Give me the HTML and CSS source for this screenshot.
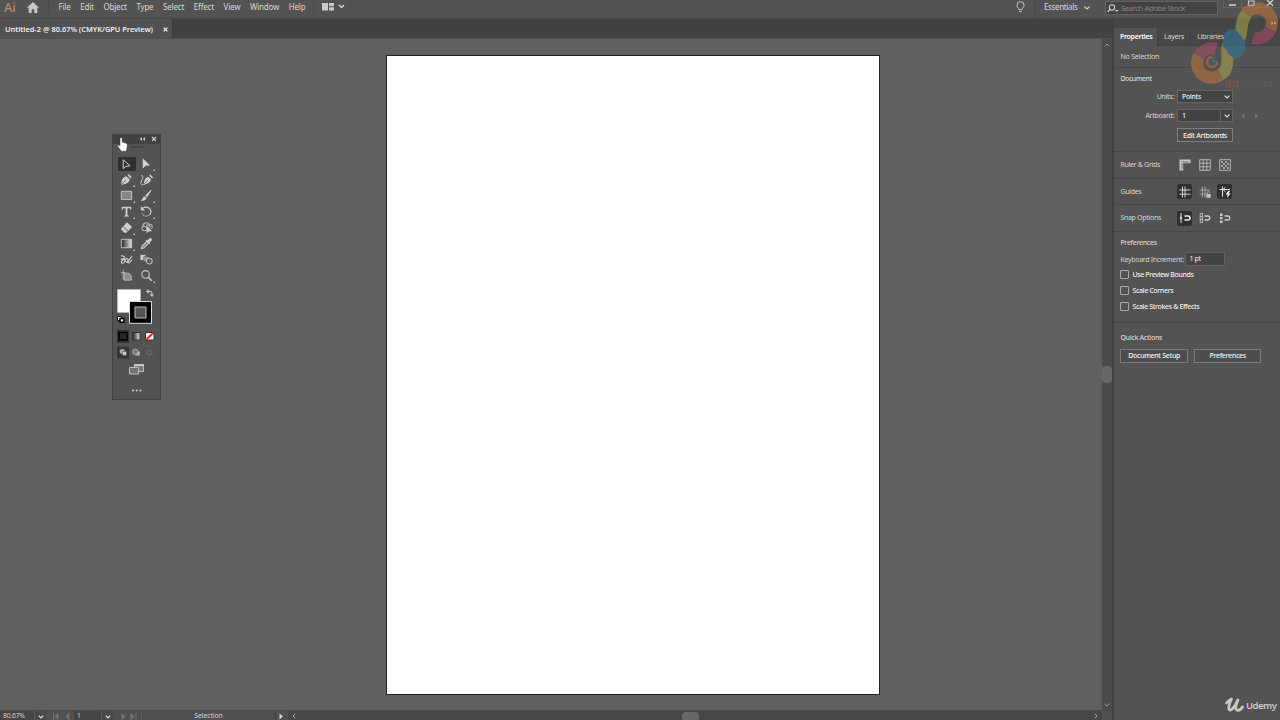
FILE: index.html
```html
<!DOCTYPE html>
<html lang="en">
<head>
    <meta charset="UTF-8">
    <title>Untitled-2 - Illustrator</title>
    <link rel="stylesheet" href="styles.css">
</head>
<body>
    <header class="menubar">
        <span class="app-logo">Ai</span>
        <svg class="home" width="12" height="11" viewBox="0 0 12 11"><path d="M6 0L12 5.7H10.3V11H7.3V7.3H4.7V11H1.7V5.7H0Z" fill="#c9c9c9"/></svg>
        <nav class="menu">
            <span>File</span><span>Edit</span><span>Object</span><span>Type</span><span>Select</span><span>Effect</span><span>View</span><span>Window</span><span>Help</span>
        </nav>
        <svg class="arrange" width="24" height="8" viewBox="0 0 24 8"><path d="M0 0H6V7.5H0ZM7 0H12V3.3H7ZM7 4.2H12V7.5H7Z" fill="#c9c9c9"/><path d="M17 2l2.5 2.5L22 2" fill="none" stroke="#d5d5d5" stroke-width="1.3"/></svg>
        <div class="menubar-right">
            <svg class="bulb" width="9" height="12" viewBox="0 0 9 12"><path d="M3 8.6C3 7.2 1 6.5 1 4.2a3.5 3.5 0 0 1 7 0C8 6.5 6 7.2 6 8.6ZM3.2 10.6H5.8" fill="none" stroke="#c4c4c4"/></svg>
            <div class="workspace">Essentials<svg width="6" height="4" viewBox="0 0 6 4"><path d="M.5.5L3 3L5.5.5" fill="none" stroke="#d5d5d5" stroke-width="1.2"/></svg></div>
            <div class="search">
                <svg width="12" height="9" viewBox="0 0 12 9"><circle cx="5" cy="3.5" r="2.7" fill="none" stroke="#d0d0d0" stroke-width="1.1"/><path d="M3 5.4L.6 8" stroke="#d0d0d0" stroke-width="1.3"/><path d="M8 6h3.6L9.8 8Z" fill="#d0d0d0"/></svg>
                <span>Search Adobe Stock</span>
            </div>
            <div class="window-buttons">
                <svg width="57" height="9" viewBox="0 0 57 9"><path d="M.5 0V7.5H57M18.5 0V7.5M37.5 0V7.5" fill="none" stroke="#626262"/><path d="M6 5H13" stroke="#d0d0d0" stroke-width="1.6"/><path d="M25.5 1H31V5.5H25.5Z" fill="none" stroke="#d0d0d0" stroke-width="1.2"/><path d="M44 0L50 5.7M50 0L44 5.7" stroke="#d0d0d0" stroke-width="1.3"/></svg>
            </div>
        </div>
    </header>

    <main class="workspace-area">
        <section class="document">
            <div class="tabbar">
                <div class="doc-tab"><span>Untitled-2 @ 80.67% (CMYK/GPU Preview)</span><svg width="5" height="5" viewBox="0 0 5 5"><path d="M.6.6L4.4 4.4M4.4.6L.6 4.4" stroke="#f0f0f0" stroke-width="1.3"/></svg></div>
            </div>
            <div class="view">
                <div class="canvas"><div class="artboard"></div></div>
                <div class="vscroll">
                    <svg width="6" height="4" viewBox="0 0 6 4"><path d="M.7 3.2L3 1L5.3 3.2" fill="none" stroke="#a0a0a0"/></svg>
                    <div class="vthumb"></div>
                    <svg width="6" height="4" viewBox="0 0 6 4"><path d="M.7.8L3 3L5.3.8" fill="none" stroke="#a0a0a0"/></svg>
                </div>
            </div>
            <footer class="statusbar">
                <div class="zoom-value">80.67%</div>
                <div class="drop"><svg width="6" height="4" viewBox="0 0 6 4"><path d="M.7.6L3 3L5.3.6" fill="none" stroke="#e0e0e0" stroke-width="1.2"/></svg></div>
                <svg class="pager" width="28" height="7" viewBox="0 0 28 7"><path d="M7.5 0V7M12 .5V6.5L9 3.5ZM23 .5V6.5L20 3.5Z" fill="#777" stroke="#777" stroke-width=".8"/></svg>
                <div class="page-value">1</div>
                <div class="drop"><svg width="6" height="4" viewBox="0 0 6 4"><path d="M.7.6L3 3L5.3.6" fill="none" stroke="#e0e0e0" stroke-width="1.2"/></svg></div>
                <svg class="pager" width="28" height="7" viewBox="0 0 28 7"><path d="M9 .5V6.5L12 3.5ZM18 .5V6.5L21 3.5ZM23 0V7" fill="#777" stroke="#777" stroke-width=".8"/></svg>
                <div class="status-tool">Selection</div>
                <div class="status-next"><svg width="5" height="7" viewBox="0 0 5 7"><path d="M.5.5V6.5L4 3.5Z" fill="#d5d5d5"/></svg></div>
                <div class="hscroll">
                    <svg width="4" height="6" viewBox="0 0 4 6"><path d="M3.2.7L1 3L3.2 5.3" fill="none" stroke="#aaa"/></svg>
                    <div class="hthumb"></div>
                    <svg width="4" height="6" viewBox="0 0 4 6"><path d="M.8.7L3 3L.8 5.3" fill="none" stroke="#aaa"/></svg>
                </div>
                <div class="corner"></div>
            </footer>
        </section>

        <aside class="panel">
            <div class="panel-top"><svg width="6" height="4" viewBox="0 0 6 4"><path d="M.3 0V4L2.5 2ZM3.3 0V4L5.5 2Z" fill="#ccc"/></svg></div>
            <div class="panel-tabs"><span class="active">Properties</span><span>Layers</span><span>Libraries</span></div>
            <div class="section selection-state">No Selection</div>
            <div class="section doc-section">
                <h2>Document</h2>
                <div class="field"><label>Units:</label><div class="select">Points<i><svg width="6" height="4" viewBox="0 0 6 4"><path d="M.6.6L3 3L5.4.6" fill="none" stroke="#e0e0e0" stroke-width="1.1"/></svg></i></div></div>
                <div class="field"><label>Artboard:</label><div class="select split">1<i><svg width="6" height="4" viewBox="0 0 6 4"><path d="M.6.6L3 3L5.4.6" fill="none" stroke="#e0e0e0" stroke-width="1.1"/></svg></i></div><svg class="arrows" width="18" height="6" viewBox="0 0 18 6"><path d="M3.5.3V5.7L.5 3ZM14 .3V5.7L17 3Z" fill="#757575"/></svg></div>
                <button class="btn edit-btn">Edit Artboards</button>
            </div>
            <div class="section icon-row">
                <span>Ruler &amp; Grids</span>
                <div class="icons">
                    <b><svg width="12" height="12" viewBox="0 0 12 12"><path d="M.5.5H11.5V4.200H4.200V11.5H.5Z" fill="#c6c6c6"/><path d="M3 2V3M5 2V4.200M7 2V4.200M9 2V4.200M2 5H4.200M2 7H4.200M2 9H4.200" stroke="#686868" stroke-width=".9"/></svg></b>
                    <b><svg width="12" height="12" viewBox="0 0 12 12"><path d="M.7.7H11.3V11.3H.7ZM4.2.7V11.3M7.8.7V11.3M.7 4.2H11.3M.7 7.8H11.3" fill="none" stroke="#bfbfbf" stroke-width=".9"/></svg></b>
                    <b><svg width="12" height="12" viewBox="0 0 12 12"><path d="M.7.7H11.3V11.3H.7Z" fill="none" stroke="#bdbdbd" stroke-width=".9"/><path d="M2 2h2v2H2ZM6 2h2v2H6ZM4 4h2v2H4ZM8 4h2v2H8ZM2 6h2v2H2ZM6 6h2v2H6ZM4 8h2v2H4ZM8 8h2v2H8Z" fill="#a5a5a5"/></svg></b>
                </div>
            </div>
            <div class="section icon-row">
                <span>Guides</span>
                <div class="icons">
                    <b class="on"><svg width="12" height="12" viewBox="0 0 12 12"><path d="M3.5.5V11.5M6 .5V11.5M.5 4H11.5M.5 8.2H11.5" stroke="#e2e2e2" stroke-width=".9"/></svg></b>
                    <b><svg width="12" height="12" viewBox="0 0 12 12"><path d="M3.5.5V11.5M6 .5V11.5M.5 4H11M.5 8H6.5" stroke="#aaa" stroke-width=".9"/><path d="M7.3 8H11.7V11.7H7.3Z" fill="#c4c4c4"/><path d="M8.1 8V7a1.3 1.3 0 0 1 2.7 0" fill="none" stroke="#c4c4c4" stroke-width=".8"/></svg></b>
                    <b class="on"><svg width="12" height="12" viewBox="0 0 12 12"><path d="M3.500 .5V10.5M.5 3.500H11M4 3.500L6.500 1.200M4 3.500L6.500 5.800" fill="none" stroke="#e2e2e2" stroke-width="1"/><path d="M9 5L6.8 8.5H8.7L8 12L11.5 7.6H9.7L11 5Z" fill="#f0f0f0"/></svg></b>
                </div>
            </div>
            <div class="section icon-row">
                <span>Snap Options</span>
                <div class="icons">
                    <b class="on"><svg width="12" height="12" viewBox="0 0 12 12"><path d="M2 1V11" stroke="#ddd"/><path d="M2 4.200L.6 6L2 7.800L3.400 6Z" fill="#ddd"/><path d="M5.500 4H9a2 2 0 0 1 0 4H5.500" fill="none" stroke="#eee" stroke-width="1.5"/></svg></b>
                    <b><svg width="12" height="12" viewBox="0 0 12 12"><path d="M1.2 1V11M3.5 1V11M1.2 1.5H3.5M1.2 4.5H3.5M1.2 7.5H3.5M1.2 10.5H3.5" stroke="#bbb" stroke-width=".9"/><path d="M5.5 4H8.8a2 2 0 0 1 0 4H5.5" fill="none" stroke="#c9c9c9" stroke-width="1.3"/></svg></b>
                    <b><svg width="12" height="12" viewBox="0 0 12 12"><path d="M1 1.5H3.5V4H1ZM1 5H3.5V7.3H1ZM1 8.5H3.5V11H1Z" fill="#c9c9c9"/><path d="M5.5 4H8.8a2 2 0 0 1 0 4H5.5" fill="none" stroke="#c9c9c9" stroke-width="1.3"/></svg></b>
                </div>
            </div>
            <div class="section prefs">
                <h2>Preferences</h2>
                <div class="increment"><label>Keyboard Increment:</label><div class="input">1 pt</div></div>
                <div class="check"><i></i>Use Preview Bounds</div>
                <div class="check"><i></i>Scale Corners</div>
                <div class="check"><i></i>Scale Strokes &amp; Effects</div>
            </div>
            <div class="section quick">
                <h2>Quick Actions</h2>
                <div class="buttons"><button class="btn">Document Setup</button><button class="btn">Preferences</button></div>
            </div>
        </aside>
    </main>

    <!-- floating tools panel -->
    <div class="tools">
        <div class="tools-head"><svg width="20" height="6" viewBox="0 0 20 6"><path d="M4 1V5L1.800 3ZM7 1V5L4.800 3Z" fill="#ccc"/><path d="M14 1L18 5M18 1L14 5" stroke="#ccc" stroke-width="1.2"/></svg></div>
        <div class="grip"></div>
        <div class="tool-grid">
            <b class="on"><svg viewBox="0 0 16 16"><path d="M4.5 3V12.5L7.3 10L11.8 9.5Z" fill="none" stroke="#d5d5d5"/></svg></b>
            <b class="more"><svg viewBox="0 0 16 16"><path d="M4 2.5V13.3L7.3 10.3L12 10Z" fill="#d0d0d0"/></svg></b>
            <b class="more"><svg viewBox="0 0 16 16"><path d="M2.5 13.5C2.5 9 3.5 5.7 8 4.5L11.5 8C10.5 12 7 13 2.5 13.5ZM9 3.5L10.5 2.3L13.5 5.4L12.5 7Z" fill="#cfcfcf"/><path d="M3 13L7.5 8.5" stroke="#555" stroke-width=".8"/></svg></b>
            <b><svg viewBox="0 0 16 16"><path d="M5 13.5C5.5 9 6.5 6 10 5L13 8C12 11.5 9 12.8 5 13.5ZM11 4L12 2.5L15 5.5L14 7Z" fill="#cfcfcf"/><path d="M2 4C6 3 3 9 2 11C1 14 4 14 6 13" fill="none" stroke="#cfcfcf"/><path d="M5.5 13L9.5 8.5" stroke="#555" stroke-width=".8"/></svg></b>
            <b class="more"><svg viewBox="0 0 16 16"><path d="M2.5 3.5H13.5V12.3H2.5Z" fill="#858585" stroke="#c5c5c5"/></svg></b>
            <b class="more"><svg viewBox="0 0 16 16"><path d="M13.5 2.5L8.5 10L6.5 8.2L12.5 2ZM6 8.8L8 10.7C7.5 13 5 14 2 13.3C4 12.5 3.7 9.5 6 8.8Z" fill="#cfcfcf"/></svg></b>
            <b class="more"><svg viewBox="0 0 16 16"><path d="M3 3H13V6H12L11.5 4.5H9V12L10.5 12.4V13.3H5.5V12.4L7 12V4.5H4.5L4 6H3Z" fill="#cfcfcf"/></svg></b>
            <b class="more"><svg viewBox="0 0 16 16"><path d="M4 4.5C9 1 14.5 6 12 10.5" fill="none" stroke="#cfcfcf" stroke-width="1.3"/><path d="M12 10.5C10 14 5 13.5 3.3 10" fill="none" stroke="#cfcfcf" stroke-width="1.2" stroke-dasharray="1.4 1"/><path d="M2 2.5V7H6.5Z" fill="#cfcfcf"/></svg></b>
            <b class="more"><svg viewBox="0 0 16 16"><path d="M2 9.5L8.5 2.5L14 7.5L8 13.5H5.5Z" fill="#cfcfcf"/><path d="M4.8 7.5L9.5 11.7" stroke="#555"/></svg></b>
            <b><svg viewBox="0 0 16 16"><path d="M8 11C4 12.5 1.5 9 4 7C4 3 9 1.5 11 4.5C14.5 4 15 8 13 9M4 7C6 6.5 8 7 8 9M8 5C11 5 12 6 12 8" fill="none" stroke="#bdbdbd" stroke-width="1.1"/><path d="M8 5.5V14.5L10.3 12L14 12Z" fill="#d0d0d0"/></svg></b>
            <b class="more"><svg viewBox="0 0 16 16"><defs><linearGradient id="grad"><stop offset="0" stop-color="#222"/><stop offset="1" stop-color="#e5e5e5"/></linearGradient></defs><path d="M2.5 3.5H13.5V12.5H2.5Z" fill="url(#grad)" stroke="#c5c5c5"/></svg></b>
            <b><svg viewBox="0 0 16 16"><path d="M8 6L3.3 10.7L2.5 13.5L5.5 12.7L10 8" fill="#8a8a8a" stroke="#cfcfcf" stroke-width="1.1"/><path d="M7 5L8.2 4L9 4.7L11 2.7C12.5 1.2 14.8 3.5 13.3 5L11.3 7L12 7.8L11 9Z" fill="#cfcfcf"/></svg></b>
            <b><svg viewBox="0 0 16 16"><path d="M2 4C5 4 8 6 5 8C2 9 2 12 4 12C7 12 6 6 9 7C11 8 8 11 10 11.5C12 12 12 9 14 8.5M2 8C6 5 6 11 9 11L14 4" fill="none" stroke="#cfcfcf" stroke-width="1.2"/></svg></b>
            <b><svg viewBox="0 0 16 16"><path d="M1.500 3H7V8.5H1.500Z" fill="#cfcfcf"/><path d="M5 5H10.500V10.5H5Z" fill="#999" stroke="#555" stroke-width=".6"/><circle cx="11" cy="9.7" r="3.200" fill="#5d5d5d" stroke="#cfcfcf"/></svg></b>
            <b><svg viewBox="0 0 16 16"><path d="M4.5 2V12H14M2 5H7" fill="none" stroke="#bdbdbd"/><path d="M5.5 5.5H10.5L13 8V13H5.5Z" fill="#8e8e8e" stroke="#c5c5c5" stroke-width=".8"/></svg></b>
            <b class="more"><svg viewBox="0 0 16 16"><circle cx="7" cy="6.8" r="4" fill="none" stroke="#c5c5c5" stroke-width="1.2"/><path d="M10 10L13.7 13.7" stroke="#c5c5c5" stroke-width="1.7"/></svg></b>
        </div>
        <svg class="colors" width="47" height="38" viewBox="0 0 47 38">
            <path d="M4.5 3.5H27.5V26.5H4.5Z" fill="#fff" stroke="#c0c0c0" stroke-width=".6"/>
            <path d="M16.5 15.5H38.5V37.3H16.5Z" fill="#000" stroke="#dcdcdc"/>
            <path d="M22 21H33V32H22Z" fill="#555" stroke="#bbb"/>
            <path d="M34.5 5.500H37.5Q39 5.500 39 9" fill="none" stroke="#c5c5c5" stroke-width="1.2"/><path d="M35.7 3V8L33 5.500ZM36.7 8.500H41L39 11Z" fill="#c5c5c5"/>
            <path d="M4.5 30.5H8.5V34.5H4.5Z" fill="#fff" stroke="#111"/><path d="M7 32.5H11V36.3H7Z" fill="#eee" stroke="#000" stroke-width="1.5"/>
        </svg>
        <svg class="modes" width="47" height="72" viewBox="0 0 47 72">
            <path d="M4 2H16V15H4Z" fill="#323232"/><path d="M6 4.5H14V12H6Z" fill="#292929" stroke="#000" stroke-width="1.5"/>
            <path d="M19.5 4.5H27V12H19.5Z" fill="url(#grad)" stroke="#303030"/>
            <path d="M32.5 4.5H41V12H32.5Z" fill="#fff" stroke="#333"/><path d="M33 11.7L40.5 4.7" stroke="#e02a20" stroke-width="2"/>
            <path d="M4 18.500H16V30.500H4Z" fill="#353535"/>
            <circle cx="9.3" cy="23.500" r="2.6" fill="#aaa"/><path d="M9.5 23.500H13.5V27.5H9.5Z" fill="#ccc" stroke="#444" stroke-width=".5"/>
            <path d="M22.5 23.500H26.8V27.500H22.5Z" fill="#bbb"/><circle cx="22.3" cy="23.8" r="2.7" fill="#777" stroke="#bbb" stroke-width=".8"/>
            <circle cx="36.5" cy="24.500" r="2.5" fill="none" stroke="#6c6c6c"/><path d="M32 18.5H41V29" fill="none" stroke="#5b5b5b" stroke-width=".7"/>
            <path d="M21.5 36.5H30.5V43.5H21.5Z" fill="#777" stroke="#bbb"/><path d="M21 37.3H31" stroke="#ccc" stroke-width="1.5"/><path d="M16.5 39.5H25.5V46H16.5Z" fill="#737373" stroke="#bbb"/>
            <circle cx="20" cy="62.500" r="1.1" fill="#ccc"/><circle cx="23.7" cy="62.500" r="1.1" fill="#ccc"/><circle cx="27.4" cy="62.500" r="1.1" fill="#ccc"/>
        </svg>
    </div>

    <svg class="cursor" width="11" height="15" viewBox="0 0 11 15"><path d="M3 8V1.2Q4.200 0 5.200 1.200V5L9.300 6.3Q10.600 7 10.300 9.5L9.300 14.200H4.2L.6 9Q.6 7.6 2 8L3 9Z" fill="#fff" stroke="#333" stroke-width=".5"/></svg>

    <!-- channel watermark -->
    <div class="watermark">
        <svg width="95" height="95" viewBox="0 0 95 95" fill="none">
            <g stroke-width="12">
                <path d="M54 39C58 35 54 20 62.500 13.500" stroke="#b5b44e"/>
                <path d="M61 13.800A14.500 14.500 0 0 1 85.500 29" stroke="#cd793c"/>
                <path d="M85.500 29A14.500 14.500 0 0 1 68 38" stroke="#b74c68"/>
                <path d="M43 45C40 53 47 69 35 75" stroke="#b5b44e"/>
                <path d="M35 75A14.500 14.500 0 0 1 14 56" stroke="#cd793c"/>
                <path d="M14 56A14.500 14.500 0 0 1 31 49" stroke="#b74c68"/>
            </g>
            <path d="M39 34Q44 27 51 30L60 41Q62 50 56 57Q50 61 44 54L38 46Z" fill="#317fa9"/>
            <path d="M27 57A5 5 0 1 0 32 62" stroke="#cd793c" stroke-width="2.5"/><path d="M28 57V61H32" stroke="#317fa9" stroke-width="2"/>
        </svg>
        <span class="wm-text"><em>dd</em>panda</span>
    </div>
    <div class="udemy"><svg width="20" height="16" viewBox="0 0 20 16"><path d="M1.5 6Q4 3 6.5 2Q3 9 4 12.5Q7 15 12 4.5L13 3Q9 12 12 13.3Q15 14 17.5 10" fill="none" stroke="#c9c9c9" stroke-width="2.7" stroke-linejoin="round" stroke-linecap="round"/></svg><span>Udemy</span></div>
</body>
</html>
```
FILE: styles.css
```css
* {
    box-sizing: border-box;
}
body {
    margin: 0;
    width: 1280px;
    height: 720px;
    overflow: hidden;
    background: #535353;
    color: #d6d6d6;
    font-family: "Noto Sans", "Open Sans", sans-serif;
    font-size: 8px;
    line-height: 10px;
}
svg {
    display: block;
    flex: none;
}
h2 {
    margin: 0;
    font-size: 7px;
    font-weight: 500;
    line-height: 10px;
}

/* menu bar */
.menubar {
    display: flex;
    height: 19px;
    border-bottom: 1px solid #464646;
    white-space: nowrap;
}
.app-logo {
    width: 27px;
    padding-left: 4px;
    color: #c68a60;
    font-size: 12.5px;
    font-weight: 500;
    line-height: 15px;
}
.home {
    margin-top: 2px;
}
.menu {
    display: flex;
    gap: 9.6px;
    width: 266px;
    height: 14px;
    margin-left: 9px;
    padding: 2px 0 0 9.5px;
    border-left: 1px solid #4b4b4b;
    border-right: 1px solid #4b4b4b;
    letter-spacing: -0.18px;
}
.arrange {
    margin: 3px 0 0 8px;
}
.menubar-right {
    display: flex;
    margin-left: auto;
}
.bulb {
    margin-top: 1px;
}
.workspace {
    display: flex;
    gap: 7px;
    width: 74px;
    margin-left: 10px;
    padding: 2px 0 0 8px;
    border-left: 1px solid #484848;
    letter-spacing: -0.35px;
}
.workspace svg {
    margin-top: 4px;
}
.search {
    display: flex;
    gap: 2px;
    width: 113px;
    height: 14px;
    margin-top: 1px;
    margin-left: -4px;
    padding: 1px 1px;
    border: 1px solid #626262;
    background: #434343;
    color: #858585;
    font-size: 7.6px;
    letter-spacing: -0.35px;
}
.search svg {
    margin-top: 1px;
}
.window-buttons {
    margin-left: 5px;
}

/* document window */
.workspace-area {
    display: flex;
    height: 701px;
}
.document {
    display: flex;
    flex-direction: column;
    width: 1112px;
}
.tabbar {
    height: 20px;
    background: #424242;
    border-bottom: 1px solid #505050;
}
.doc-tab {
    display: flex;
    align-items: center;
    justify-content: space-between;
    width: 173px;
    height: 19px;
    padding: 1px 4px 0 5px;
    background: #515151;
    border-right: 1px solid #3b3b3b;
    color: #eee;
    font-size: 7.4px;
    font-weight: 600;
    white-space: nowrap;
}
.view {
    display: flex;
    height: 671px;
}
.canvas {
    width: 1102px;
    padding: 16px 0 0 386px;
    background: #606060;
}
.artboard {
    width: 494px;
    height: 640px;
    background: #fff;
    border: 1px solid #222;
}
.vscroll {
    display: flex;
    flex-direction: column;
    align-items: center;
    justify-content: space-between;
    width: 10px;
    padding: 4px 0 3px;
    background: #4b4b4b;
}
.vthumb {
    width: 10px;
    height: 17px;
    margin-bottom: 1px;
    border-radius: 4px;
    background: #686868;
}
.statusbar {
    display: flex;
    height: 10px;
    overflow: hidden;
    border-top: 1px solid #494949;
    background: #505050;
    font-size: 6.7px;
    line-height: 8px;
}
.zoom-value {
    width: 34px;
    padding: 1px 0 0 3px;
    background: #454545;
    letter-spacing: -0.15px;
}
.drop {
    width: 12px;
    padding: 4px 3px 0;
    border-left: 1px solid #5c5c5c;
    background: #484848;
}
.pager {
    margin-top: 2px;
}
.page-value {
    width: 27px;
    padding: 1px 0 0 3px;
    background: #454545;
}
.status-tool {
    width: 135px;
    padding-top: 1px;
    border-left: 1px solid #5c5c5c;
    border-right: 1px solid #404040;
    text-align: center;
}
.status-next {
    width: 12px;
    padding: 2px 3px 0;
}
.hscroll {
    display: flex;
    justify-content: space-between;
    flex: 1;
    padding: 2px 4px 0 4px;
    background: #474747;
}
.hthumb {
    width: 17px;
    height: 10px;
    margin: -1px 9px 0 0;
    border-radius: 4px;
    background: #686868;
}
.corner {
    width: 10px;
    background: #505050;
}

/* properties panel */
.panel {
    width: 168px;
    border-left: 2px solid #3f3f3f;
    background: #535353;
    font-size: 7px;
    letter-spacing: -0.3px;
}
.panel-top {
    display: flex;
    justify-content: flex-end;
    height: 9px;
    padding: 2px 3px 0;
    background: #444;
}
.panel-tabs {
    display: flex;
    height: 18px;
    background: #474747;
    border-bottom: 1px solid #404040;
}
.panel-tabs span {
    padding: 4px 6px 0;
    border-right: 1px solid #404040;
    letter-spacing: -0.2px;
}
.panel-tabs span.active {
    width: 44px;
    height: 18px;
    background: #535353;
    color: #fff;
    font-weight: 600;
    letter-spacing: -0.3px;
}
.section {
    padding: 0 6.4px;
    border-bottom: 1px solid #484848;
}
.selection-state {
    height: 22px;
    padding-top: 6px;
    letter-spacing: -0.2px;
}
.doc-section {
    height: 84px;
    padding-top: 6px;
}
.field {
    display: flex;
    align-items: center;
    height: 13px;
    margin-top: 6px;
}
.doc-section h2 {
    letter-spacing: -0.55px;
    letter-spacing: -0.45px;
}
.field label {
    width: 53.6px;
    text-align: right;
}
.select {
    display: flex;
    justify-content: space-between;
    align-items: center;
    width: 56px;
    height: 13px;
    margin-left: 3px;
    padding-left: 4px;
    border: 1px solid #646464;
    background: #434343;
    color: #f2f2f2;
    font-weight: 500;
}
.select i {
    display: flex;
    align-items: center;
    height: 11px;
    padding: 0 2px 0 3px;
}
.split i {
    border-left: 1px solid #606060;
}
.arrows {
    margin-left: 8px;
}
.btn {
    height: 14px;
    padding: 0;
    border: 1px solid #7c7c7c;
    background: #4d4d4d;
    color: #f5f5f5;
    font-family: inherit;
    font-size: 7px;
    font-weight: 500;
    line-height: 11px;
    letter-spacing: -0.3px;
}
.edit-btn {
    display: block;
    width: 56px;
    margin: 6px 0 0 56.6px;
}
.icon-row {
    display: flex;
    align-items: center;
    height: 26.6px;
    padding-top: 1px;
}
.icon-row > span {
    width: 57px;
}
.icons {
    display: flex;
    gap: 5px;
}
.icons b {
    width: 15px;
    height: 15px;
    padding: 1.5px;
    border-radius: 2px;
}
.icons b.on {
    background: #303030;
}
.prefs {
    height: 91px;
    padding-top: 6px;
}
.increment {
    display: flex;
    align-items: center;
    height: 14px;
    margin: 4px 0 1px;
    white-space: nowrap;
}
.increment label {
    width: 65px;
    padding-top: 3px;
}
.input {
    width: 40px;
    height: 14px;
    padding: 1px 3px;
    border: 1px solid #606060;
    background: #444;
    color: #eee;
}
.check {
    display: flex;
    align-items: center;
    gap: 3px;
    height: 16px;
    color: #eee;
    font-weight: 500;
    letter-spacing: -0.36px;
}
.check i {
    width: 9px;
    height: 9px;
    border: 1px solid #aaa;
    border-radius: 1px;
}
.quick {
    padding-top: 10px;
    border: 0;
}
.buttons {
    display: flex;
    gap: 6px;
    margin-top: 6px;
}
.buttons .btn {
    width: 67.5px;
}

/* floating tools */
.tools {
    position: absolute;
    left: 112px;
    top: 134px;
    width: 49px;
    height: 266px;
    border: 1px solid #434343;
    background: #535353;
}
.tools-head {
    display: flex;
    justify-content: flex-end;
    height: 9px;
    padding: 1px 2px 0;
    background: #424242;
}
.grip {
    width: 14px;
    height: 2px;
    margin: 2px auto 0;
    background: #484848;
}
.tool-grid {
    display: grid;
    grid-template-columns: 20px 20px;
    grid-auto-rows: 16px;
    margin: 7.5px 0 0 3.5px;
}
.tool-grid b {
    position: relative;
    padding: 0.5px 2.5px;
    border-radius: 1px;
}
.tool-grid svg {
    width: 15px;
    height: 15px;
}
.tool-grid .on {
    background: #303030;
    background-clip: content-box;
    padding: 1px 1px;
}
.tool-grid .on svg {
    margin: 0 1.5px;
}
.tool-grid .more::after {
    content: "";
    position: absolute;
    right: 2px;
    bottom: 1px;
    border-left: 2px solid transparent;
    border-bottom: 2px solid #ccc;
}
.colors {
    margin-top: 2.5px;
}
.modes {
    margin-top: 3.5px;
}
.cursor {
    position: absolute;
    left: 117px;
    top: 137px;
}

/* overlays */
.watermark {
    position: absolute;
    left: 1185px;
    top: 0;
    opacity: 0.5;
    filter: blur(0.3px);
}
.wm-text {
    position: absolute;
    left: 40px;
    top: 76px;
    color: #656565;
    font-size: 11.5px;
    line-height: 14px;
}
.wm-text em {
    color: #b8553f;
    font-style: normal;
}
.udemy {
    position: absolute;
    left: 1225px;
    top: 697px;
    display: flex;
    gap: 1px;
    color: #c9c9c9;
    font-size: 9.5px;
    font-weight: 600;
    line-height: 17px;
    letter-spacing: -0.5px;
}
```
